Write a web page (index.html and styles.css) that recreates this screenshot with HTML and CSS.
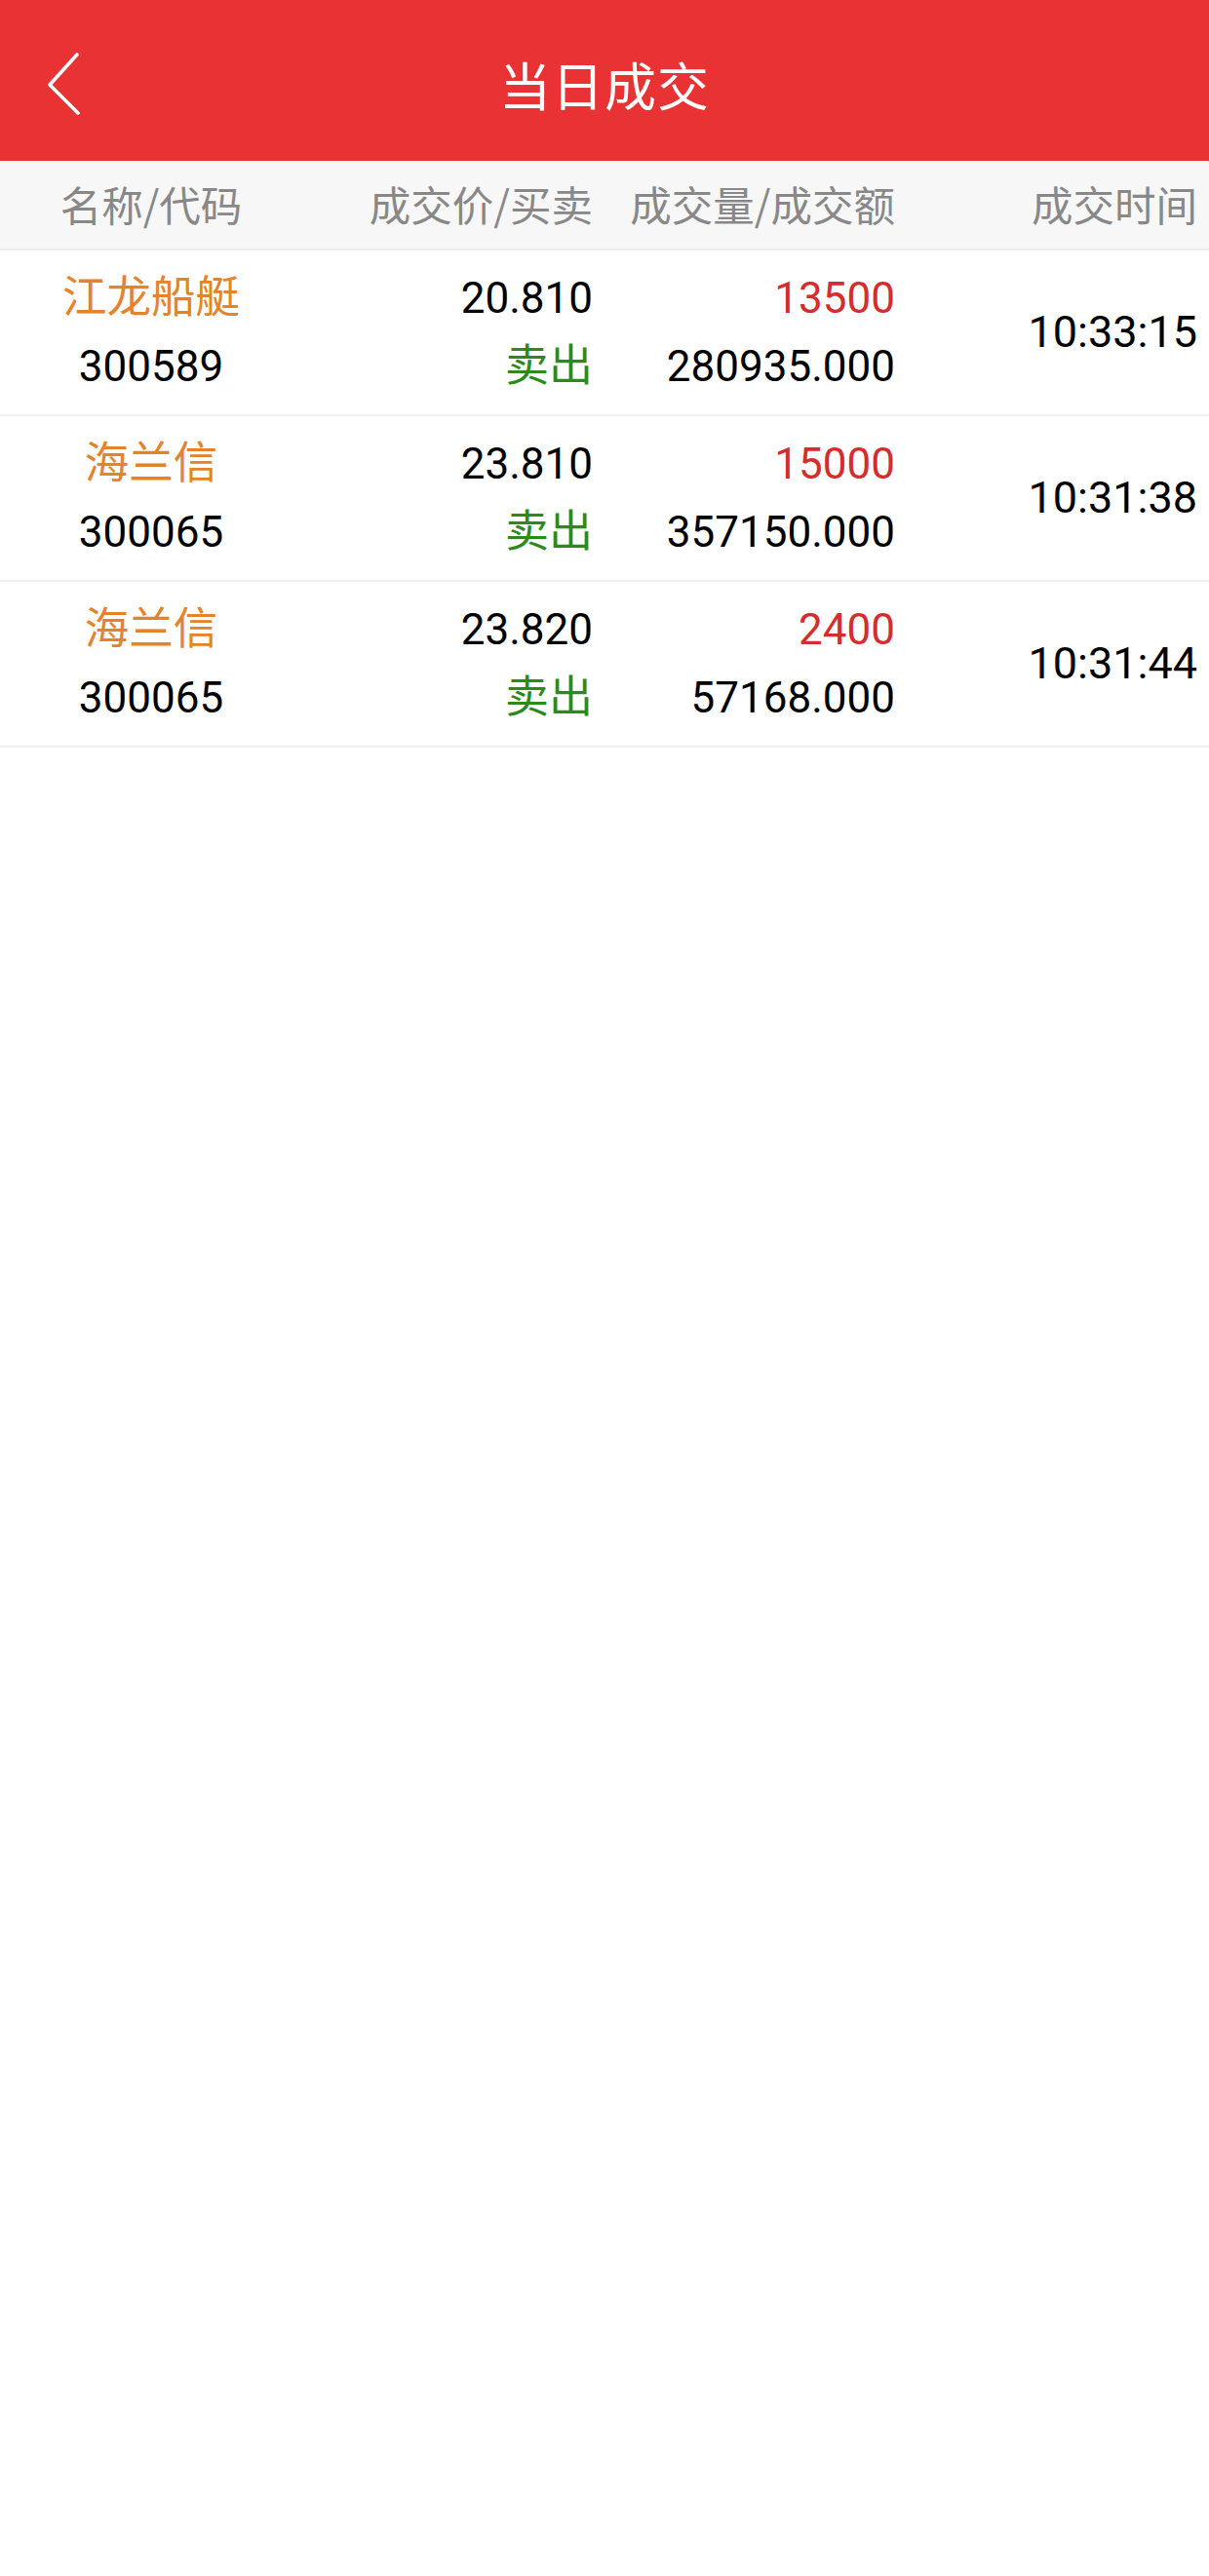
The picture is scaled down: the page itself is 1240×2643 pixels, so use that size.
FILE: index.html
```html
<!DOCTYPE html>
<html lang="zh-CN">
<head>
<meta charset="utf-8">
<title>当日成交</title>
<link rel="stylesheet" href="styles.css">
</head>
<body>
<header class="topbar">
  <a class="back" aria-label="返回">
    <svg width="40" height="70" viewBox="0 0 40 70"><polyline points="31,8 3,39 32,68" fill="none" stroke="#fff" stroke-width="3.6" stroke-linecap="round" stroke-linejoin="round"/></svg>
  </a>
  <h1 class="title">当日成交</h1>
</header>
<div class="thead">
  <div class="c c1">名称/代码</div>
  <div class="c">成交价/买卖</div>
  <div class="c">成交量/成交额</div>
  <div class="c">成交时间</div>
</div>
<div class="row">
  <div class="c c1"><span class="name">江龙船艇</span><span>300589</span></div>
  <div class="c"><span>20.810</span><span class="sell">卖出</span></div>
  <div class="c"><span class="vol">13500</span><span>280935.000</span></div>
  <div class="c time">10:33:15</div>
</div>
<div class="row">
  <div class="c c1"><span class="name">海兰信</span><span>300065</span></div>
  <div class="c"><span>23.810</span><span class="sell">卖出</span></div>
  <div class="c"><span class="vol">15000</span><span>357150.000</span></div>
  <div class="c time">10:31:38</div>
</div>
<div class="row">
  <div class="c c1"><span class="name">海兰信</span><span>300065</span></div>
  <div class="c"><span>23.820</span><span class="sell">卖出</span></div>
  <div class="c"><span class="vol">2400</span><span>57168.000</span></div>
  <div class="c time">10:31:44</div>
</div>
</body>
</html>
```
FILE: styles.css
```css
html, body {
  margin: 0;
  padding: 0;
  background: #fff;
}
body {
  font-family: Roboto, "Noto Sans CJK SC", sans-serif;
  color: #000;
}
.topbar {
  height: 165px;
  background: #e83234;
  position: relative;
  display: flex;
  align-items: center;
  justify-content: center;
}
.back {
  position: absolute;
  left: 48px;
  top: 48px;
  width: 40px;
  height: 70px;
  display: block;
}
.back svg { display: block; }
.title {
  margin: 0;
  padding-top: 6px;
  font-family: "Noto Sans CJK SC", sans-serif;
  font-weight: 400;
  font-size: 53px;
  color: #fff;
  letter-spacing: 1px;
}
.thead {
  height: 90px;
  box-sizing: border-box;
  padding-bottom: 4px;
  background: #f7f7f7;
  border-bottom: 2px solid #ececec;
  display: grid;
  grid-template-columns: repeat(4, 1fr);
  align-items: center;
  font-family: "Noto Sans CJK SC", sans-serif;
  font-size: 42.5px;
  color: #888;
}
.thead { height: 92px; }
.c {
  text-align: right;
  padding-right: 12px;
  white-space: nowrap;
}
.c1 {
  text-align: center;
  padding-right: 0;
}
.row {
  height: 168px;
  border-bottom: 2px solid #efefef;
  display: grid;
  grid-template-columns: repeat(4, 1fr);
  align-items: center;
  font-size: 44px;
  color: #000;
}
.row .c {
  display: flex;
  flex-direction: column;
  align-items: flex-end;
  line-height: 70px;
}
.row .c1 { align-items: center; }
.row .time { display: block; line-height: 70px; font-size: 45px; }
.name { color: #e4832a; font-size: 45.5px; }
.sell { color: #2b8a1a; font-size: 45px; }
.vol { color: #d42d2d; }
```
